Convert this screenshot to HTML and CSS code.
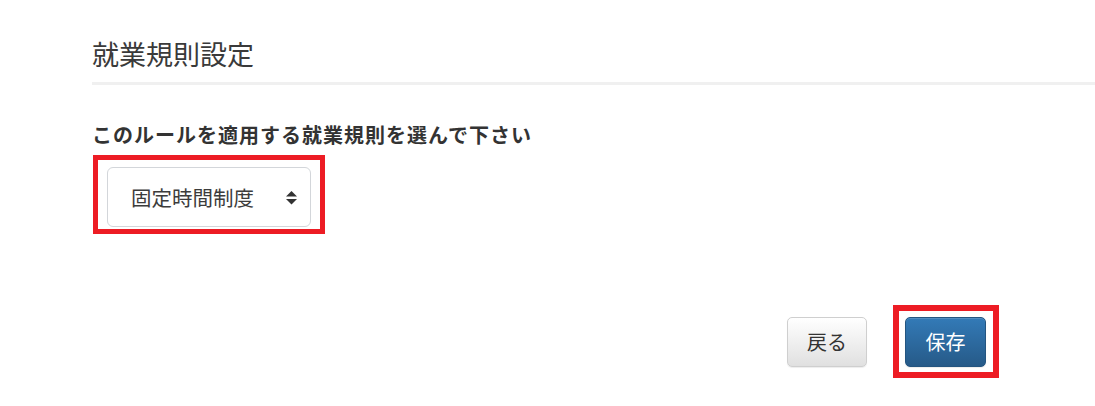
FILE: index.html
```html
<!DOCTYPE html>
<html lang="ja">
<head>
<meta charset="utf-8">
<title>就業規則設定</title>
<link rel="stylesheet" href="styles.css">
</head>
<body>
<div class="page">
  <h1 class="title">就業規則設定</h1>
  <p class="label">このルールを適用する就業規則を選んで下さい</p>
  <div class="mark mark-select">
    <div class="select">
      <span class="select-text">固定時間制度</span>
      <svg class="arrows" width="11" height="14" viewBox="0 0 11 14" aria-hidden="true">
        <polygon points="5.5,0 11,5.5 0,5.5" fill="#333"/>
        <polygon points="0,8 11,8 5.5,13.5" fill="#333"/>
      </svg>
    </div>
  </div>
  <div class="actions">
    <button class="btn btn-default" type="button">戻る</button>
    <div class="mark mark-save">
      <button class="btn btn-primary" type="button">保存</button>
    </div>
  </div>
</div>
</body>
</html>
```
FILE: styles.css
```css
* { box-sizing: border-box; }
html, body { margin: 0; padding: 0; background: #fff; }
body {
  font-family: "Noto Sans CJK JP", "Noto Sans", sans-serif;
  color: #333;
}
.page {
  padding: 38px 0 0 92px;
}
.title {
  margin: 0;
  font-size: 27px;
  font-weight: 400;
  letter-spacing: 0;
  line-height: 32px;
  color: #3a3a3a;
  padding-bottom: 12px;
  border-bottom: 3px solid #f0f0f0;
}
.label {
  margin: 38px 0 0 0;
  font-size: 20px;
  line-height: 24px;
  font-weight: 700;
  letter-spacing: 1px;
  color: #333;
}
.mark {
  border: 5px solid #ed1c24;
}
.mark-select {
  display: inline-block;
  margin: 8px 0 0 1px;
  padding: 7px 9px 2px 9px;
}
.select {
  width: 204px;
  height: 60px;
  border: 1px solid #d3d6da;
  border-radius: 6px;
  display: flex;
  align-items: center;
  justify-content: space-between;
  padding: 0 13px 0 23px;
  background: #fff;
}
.select-text {
  font-size: 20.5px;
  letter-spacing: 0;
  color: #3c3c3c;
  line-height: 24px;
}
.arrows { display: block; margin-top: 1px; }
.actions {
  display: flex;
  justify-content: flex-end;
  align-items: center;
  gap: 26px;
  margin-top: 71px;
  padding-right: 96px;
}
.mark-save {
  border-width: 6px;
  padding: 6px 7px 5px 6px;
}
.btn {
  font-family: inherit;
  font-size: 20px;
  line-height: 24px;
  height: 50px;
  border-radius: 5px;
  cursor: pointer;
  margin: 0;
}
.btn-default {
  width: 80px;
  padding: 0;
  color: #333;
  background: linear-gradient(to bottom, #ffffff 0%, #e0e0e0 100%);
  border: 1px solid #cfcfcf;
  box-shadow: inset 0 1px 0 rgba(255,255,255,.15), 0 1px 1px rgba(0,0,0,.075);
}
.btn-primary {
  width: 81px;
  padding: 0;
  color: #fff;
  font-weight: 400;
  background: linear-gradient(to bottom, #337ab7 0%, #265a88 100%);
  border: 1px solid #245580;
  box-shadow: inset 0 1px 0 rgba(255,255,255,.15), 0 1px 1px rgba(0,0,0,.075);
}
```
